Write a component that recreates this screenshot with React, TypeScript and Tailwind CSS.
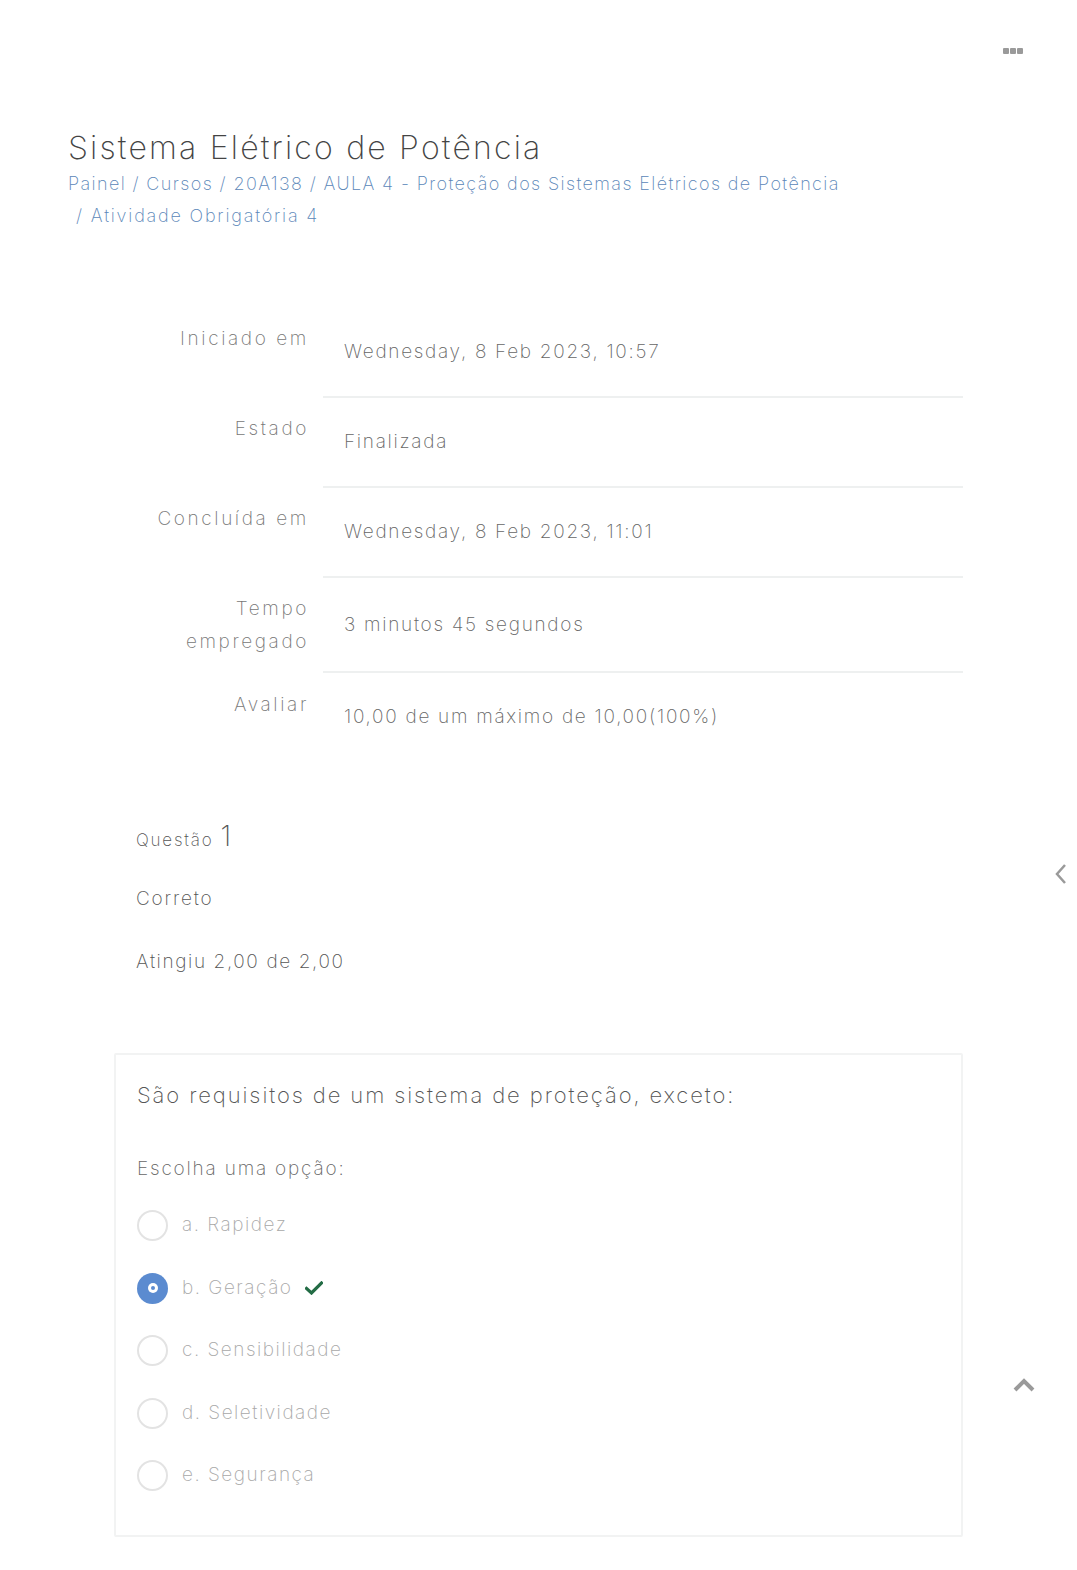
import React from "react";

const rows: { label: React.ReactNode; value: string; h: string; lp: string; vp: string }[] = [
  { label: "Iniciado em", value: "Wednesday, 8 Feb 2023, 10:57", h: "h-[90px]", lp: "pt-[14px]", vp: "pt-[36px]" },
  { label: "Estado", value: "Finalizada", h: "h-[90px]", lp: "pt-[14px]", vp: "pt-[36px]" },
  { label: "Concluída em", value: "Wednesday, 8 Feb 2023, 11:01", h: "h-[90px]", lp: "pt-[14px]", vp: "pt-[36px]" },
  { label: <>Tempo<br />empregado</>, value: "3 minutos 45 segundos", h: "h-[95px]", lp: "pt-[14px]", vp: "pt-[39px]" },
  { label: "Avaliar", value: "10,00 de um máximo de 10,00(100%)", h: "h-[90px]", lp: "pt-[15px]", vp: "pt-[36px]" },
];

const options = ["a. Rapidez", "b. Geração", "c. Sensibilidade", "d. Seletividade", "e. Segurança"];

export default function App() {
  return (
    <div
      className="relative w-[1077px] min-h-[1570px] bg-white text-[#555] font-light"
      style={{ fontFamily: "Inter, 'Noto Sans', sans-serif" }}
    >
      {/* top dots */}
      <div className="flex justify-end pt-[48px] pr-[54px]">
        <div className="flex gap-[1px]">
          <span className="block w-[6px] h-[6px] rounded-[1px] bg-[#9a9a9a]" />
          <span className="block w-[6px] h-[6px] rounded-[1px] bg-[#9a9a9a]" />
          <span className="block w-[6px] h-[6px] rounded-[1px] bg-[#9a9a9a]" />
        </div>
      </div>

      {/* header */}
      <div className="pl-[68px] pt-[74px]">
        <h1 className="text-[32px] leading-[40px] font-extralight text-[#444] tracking-[2.2px]">
          Sistema Elétrico de Potência
        </h1>
        <div className="text-[18px] leading-[32px] text-[#5a86b8] font-extralight tracking-[1.38px]">
          <div>Painel / Cursos / 20A138 / AULA 4 - Proteção dos Sistemas Elétricos de Potência</div>
          <div className="pl-[8px] tracking-[1.8px]">/ Atividade Obrigatória 4</div>
        </div>
      </div>

      {/* summary table */}
      <div className="mt-[76px] ml-[114px] w-[849px]">
        {rows.map((r, i) => (
          <div key={i} className={`flex ${r.h}`}>
            <div className={`w-[209px] pr-[14px] text-right text-[19px] leading-[33px] text-[#777] font-extralight tracking-[2.6px] ${r.lp}`}>
              {r.label}
            </div>
            <div
              className={`flex-1 pl-[21px] text-[19px] leading-[16px] text-[#666] font-extralight tracking-[1.7px] ${
                i < rows.length - 1 ? "border-b-2 border-[#eef0f0]" : ""
              } ${r.vp}`}
            >
              {r.value}
            </div>
          </div>
        ))}
      </div>

      {/* question info */}
      <div className="ml-[136px] mt-[58px] text-[#555] font-extralight">
        <div className="flex items-baseline gap-[7px]">
          <span className="text-[17px] tracking-[1.8px]">Questão</span>
          <span className="text-[28px] leading-[30px]">1</span>
        </div>
        <div className="mt-[31px] text-[19px] tracking-[1.8px]">Correto</div>
        <div className="mt-[35px] text-[19px] tracking-[1.6px]">Atingiu 2,00 de 2,00</div>
      </div>

      {/* card */}
      <div className="ml-[114px] mt-[76px] w-[849px] border-2 border-[#f2f3f3] rounded-[2px] pl-[21px] pt-[24px] pb-[44px]">
        <div className="text-[22px] text-[#555] font-extralight tracking-[1.9px]">São requisitos de um sistema de proteção, exceto:</div>
        <div className="mt-[43px] text-[19px] text-[#666] font-extralight tracking-[1.8px]">Escolha uma opção:</div>
        <div className="mt-[27px] flex flex-col gap-[31.5px]">
          {options.map((o, i) => (
            <div key={i} className="flex items-center h-[31px]">
              {i === 1 ? (
                <span className="w-[31px] h-[31px] rounded-full bg-[#5b8bd0] flex items-center justify-center">
                  <span className="w-[10px] h-[10px] rounded-full bg-white flex items-center justify-center">
                    <span className="w-[4px] h-[4px] rounded-full bg-[#5b8bd0]" />
                  </span>
                </span>
              ) : (
                <span className="w-[31px] h-[31px] rounded-full border-2 border-[#e3e3e3]" />
              )}
              <span className="ml-[14px] text-[19px] text-[#a8a8a8] font-extralight tracking-[1.5px]">{o}</span>
              {i === 1 && (
                <svg className="ml-[13px]" width="18" height="14" viewBox="0 0 18 14">
                  <path d="M1.5 7.5 L6.5 12 L16.5 2" fill="none" stroke="#236c45" strokeWidth="3.2" strokeLinecap="square" />
                </svg>
              )}
            </div>
          ))}
        </div>
      </div>

      {/* left chevron */}
      <div className="absolute left-[1054px] top-[862px]">
        <svg width="14" height="24" viewBox="0 0 14 24">
          <path d="M11 3 L3 12 L11 21" fill="none" stroke="#9a9a9a" strokeWidth="2.5" />
        </svg>
      </div>

      {/* scroll top */}
      <div className="absolute left-[1012px] top-[1378px]">
        <svg width="24" height="16" viewBox="0 0 24 16">
          <path d="M3 12 L12 3 L21 12" fill="none" stroke="#9a9a9a" strokeWidth="4" />
        </svg>
      </div>
    </div>
  );
}
